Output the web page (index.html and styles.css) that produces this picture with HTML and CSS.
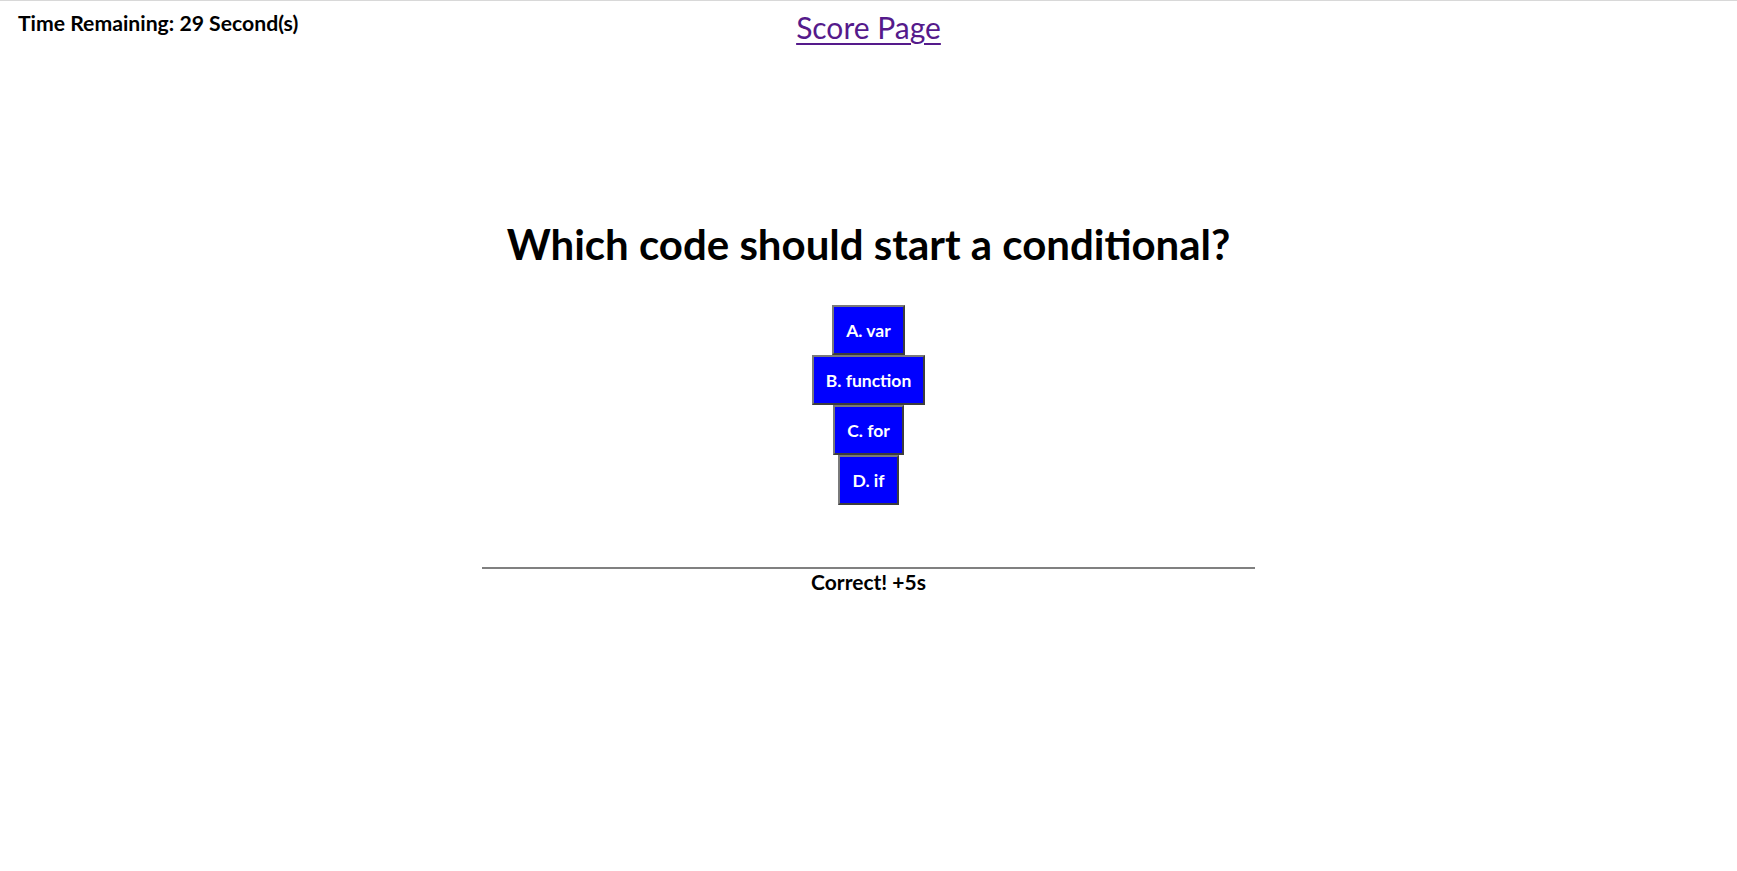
FILE: index.html
```html
<!DOCTYPE html>
<html lang="en">
<head>
<meta charset="utf-8">
<title>Code Quiz</title>
<link rel="stylesheet" href="styles.css">
</head>
<body>
<div class="page">
  <header class="top">
    <div class="timer">Time Remaining: 29 Second(s)</div>
    <a class="score-link" href="#">Score Page</a>
    <div class="spacer"></div>
  </header>
  <main class="quiz">
    <h1 class="question">Which code should start a conditional?</h1>
    <div class="choices">
      <button class="choice">A. var</button>
      <button class="choice">B. function</button>
      <button class="choice">C. for</button>
      <button class="choice">D. if</button>
    </div>
    <div class="feedback">
      <p class="feedback-text">Correct! +5s</p>
    </div>
  </main>
</div>
</body>
</html>
```
FILE: styles.css
```css
html, body {
  margin: 0;
  padding: 0;
  background: #ffffff;
}
body {
  font-family: Lato, "Open Sans", sans-serif;
  color: #000;
}
.page {
  border-top: 1px solid #d8d8d8;
  min-height: 870px;
  box-sizing: border-box;
}
.top {
  display: grid;
  grid-template-columns: 1fr auto 1fr;
  align-items: start;
  padding: 0 18px;
}
.timer {
  font-weight: 700;
  font-size: 21.2px;
  padding-top: 9px;
}
.score-link {
  color: #551a8b;
  font-size: 30px;
  padding-top: 8px;
  text-decoration: underline;
  text-decoration-thickness: 2px;
  text-underline-offset: 4px;
}
.quiz {
  display: flex;
  flex-direction: column;
  align-items: center;
  padding-top: 174px;
}
.question {
  margin: 0 0 36px;
  font-size: 42px;
  font-weight: 700;
}
.choices {
  display: flex;
  flex-direction: column;
  align-items: center;
}
.choice {
  background: #0000ff;
  color: #fff;
  font-family: inherit;
  font-weight: 700;
  font-size: 17.5px;
  padding: 0 12px;
  height: 50px;
  border: 2px solid;
  border-color: #7a7a7a #3d3d3d #3d3d3d #7a7a7a;
}
.feedback {
  width: 44.45%;
  margin-top: 62px;
  border-top: 2px solid #808080;
  text-align: center;
}
.feedback-text {
  margin: 0;
  font-weight: 700;
  font-size: 21px;
}
```
